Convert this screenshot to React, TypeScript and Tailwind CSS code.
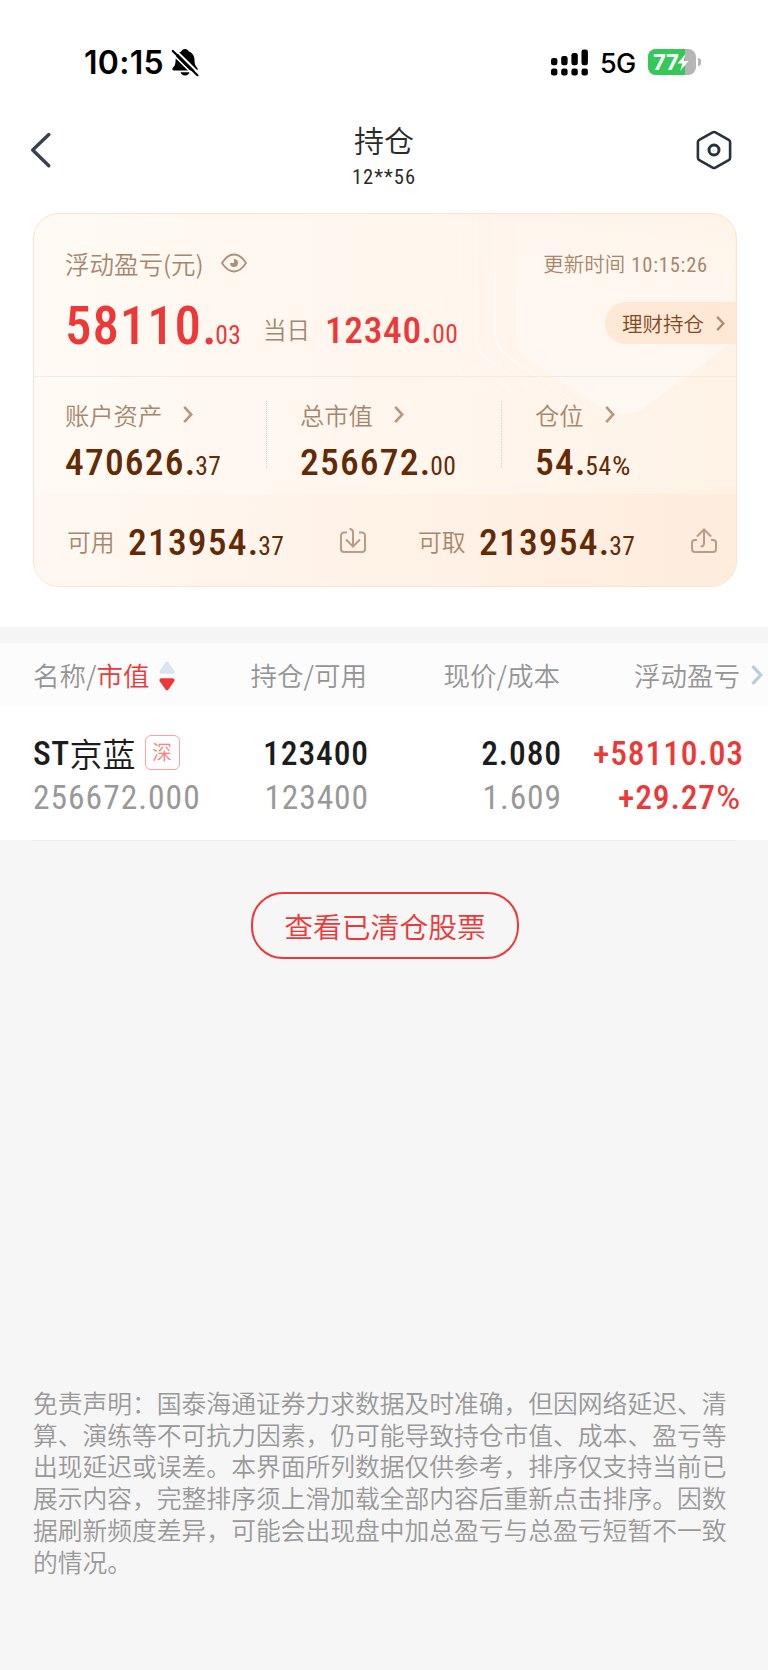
import { clsx } from 'clsx'

const CJK = "font-['Noto_Sans_CJK_SC',sans-serif]"
const NUM = "font-['Roboto_Condensed',Roboto,'Noto_Sans_CJK_SC',sans-serif]"
const SYS = "font-[Inter,'Noto_Sans_CJK_SC',sans-serif]"

function Chevron({ className }: { className?: string }) {
    return (
        <svg viewBox="0 0 10 18" fill="none" stroke="currentColor" strokeWidth="2.8" className={clsx('shrink-0', className)}>
            <path d="M1 1l7.4 8L1 17" />
        </svg>
    )
}

function StatusBar() {
    return (
        <div className={`h-[124px] flex justify-between pl-[84px] pr-[67px] pt-[44px] text-black ${SYS}`}>
            <div className="flex items-center h-9">
                <span className="text-[32px] font-semibold leading-9 tracking-[0.3px] w-[87px] pt-px">10:15</span>
                {/* Muted bell */}
                <svg width="28" height="30" viewBox="0 0 28 30" className="block">
                    <path d="M14 2c1.900 0 3.200 1 3.800 2.600 3.800 1.300 5.700 4.600 5.700 8.400 0 5 1.500 6.300 2.800 8 .9 1.300.3 2.500-1.200 2.500H3C1.500 23.500.8 22.300 1.800 21c1.400-1.700 2.800-3 2.800-8 0-3.800 1.900-7.100 5.600-8.400C10.800 3 12.100 2 14 2z" />
                    <path d="M9.500 25.300h9c-.4 2-2.200 3.200-4.500 3.200s-4.100-1.200-4.500-3.200z" />
                    <path d="M0 5.500L24.500 30" stroke="#fff" strokeWidth="1.600" />
                    <path d="M3 1.500L28 26.500" stroke="#fff" strokeWidth="2" />
                    <path d="M1.800 4L26.400 28.200" stroke="#000" strokeWidth="2.200" strokeLinecap="round" />
                </svg>
            </div>
            <div className="flex items-center h-9">
                <svg width="37" height="27" viewBox="0 0 37 27" className="mr-[12px]">
                    <rect x="0" y="9" width="6.400" height="7.300" rx="2.300" />
                    <rect x="10.200" y="7" width="6.400" height="9.300" rx="2.300" />
                    <rect x="20.400" y="4" width="6.400" height="12.300" rx="2.300" />
                    <rect x="30.500" y="0.500" width="6.400" height="15.800" rx="2.300" />
                    <rect x="0" y="19.500" width="6.400" height="7" rx="2.300" />
                    <rect x="10.200" y="19.500" width="6.400" height="7" rx="2.300" />
                    <rect x="20.400" y="19.500" width="6.400" height="7" rx="2.300" />
                    <rect x="30.500" y="19.500" width="6.400" height="7" rx="2.300" />
                </svg>
                <span className="text-[27px] font-[450] leading-9 w-[48px] tracking-[-0.7px] pt-[3px]">5G</span>
                {/* Battery */}
                <div className="relative w-12 h-[26px] rounded-[8px] overflow-hidden bg-[#b5b5b5]">
                    <div className="w-[37px] h-full bg-[#34c759]" />
                    <div className="absolute inset-0 flex items-center pl-[5px] text-white">
                        <span className="text-[22px] font-bold leading-[26px] tracking-[-0.3px]">77</span>
                        <svg width="12" height="17" viewBox="0 0 12 17" fill="#fff" className="-ml-px">
                            <path d="M8.500 0L0.500 9.500h4.800L3.200 17 11.500 7H6.700z" />
                        </svg>
                    </div>
                </div>
                <div className="ml-[2px] w-[3px] h-[8px] rounded-r-full bg-[#b5b5b5]" />
            </div>
        </div>
    )
}

function NavBar() {
    return (
        <div className="h-[89px] flex justify-between pl-[30px] pr-9">
            <svg width="40" height="38" viewBox="0 0 40 38" fill="none" stroke="#36424f" strokeWidth="3.400" strokeLinecap="round" strokeLinejoin="round" className="mt-[7px]">
                <path d="M18.800 3.500L2.700 19l16.100 15.700" />
            </svg>
            <div className="text-center text-[#2b2b2b] translate-x-px">
                <h1 className={`text-[30px] leading-9 -mt-[3px] font-[350] ${CJK}`}>持仓</h1>
                <p className={`text-[20.500px] leading-6 mt-2 font-[450] tracking-[1px] ${NUM}`}>12**56</p>
            </div>
            <svg width="36" height="40" viewBox="0 0 36 40" fill="none" stroke="#26323f" strokeWidth="2.600" strokeLinejoin="round" className="mt-[6px]">
                <path d="M16.600 2.400a2.800 2.800 0 0 1 2.800 0l13.300 7.500a2.800 2.800 0 0 1 1.400 2.400v15.400a2.800 2.800 0 0 1-1.400 2.400l-13.300 7.500a2.800 2.800 0 0 1-2.800 0L3.300 30.100a2.800 2.800 0 0 1-1.400-2.400V12.300a2.800 2.800 0 0 1 1.400-2.400z" />
                <circle cx="18" cy="20" r="5" strokeWidth="3" />
            </svg>
        </div>
    )
}

type AmountProps = { int: string; dec: string; className?: string }

function Amount({ int, dec, className = 'tracking-[1.200px]' }: AmountProps) {
    return (
        <span className={clsx('font-medium text-[37.500px] leading-10', NUM, className)}>
            {int}<span className="tracking-[0px]">.</span>
            <span className="text-[25.500px] font-[450] tracking-[0.5px]">{dec}</span>
        </span>
    )
}

const metrics = [
    { label: '账户资产', int: '470626', dec: '37' },
    { label: '总市值', int: '256672', dec: '00' },
    { label: '仓位', int: '54', dec: '54', unit: '%' },
]

function AssetCard() {
    return (
        <section className="relative mx-[33px] h-[374px] w-[704px] rounded-[26px] overflow-hidden border border-[#fde3c8] bg-gradient-to-r from-[#fffaf4] via-[#fff6ee] to-[#fff3e7]">
            {/* Shield watermark */}
            <svg className="absolute inset-0" width="702" height="280" viewBox="0 0 702 280" fill="none">
                <defs>
                    <linearGradient id="shield" x1="0" y1="0" x2="0" y2="1">
                        <stop offset="0" stopColor="#fff" stopOpacity="0" />
                        <stop offset="0.4" stopColor="#fff8f4" stopOpacity="0.6" />
                        <stop offset="1" stopColor="#fff9f3" stopOpacity="0.9" />
                    </linearGradient>
                    <linearGradient id="ring" x1="0" y1="0" x2="0" y2="1">
                        <stop offset="0" stopColor="#fff" stopOpacity="0.1" />
                        <stop offset="0.65" stopColor="#fff" stopOpacity="0.9" />
                        <stop offset="1" stopColor="#fff" stopOpacity="0.1" />
                    </linearGradient>
                </defs>
                <path d="M482 0V124q0 14 12 23l76 48q19 11 38 0l92-68V0z" fill="url(#shield)" />
                <g stroke="url(#ring)" strokeWidth="1.500">
                    <path d="M461 0V118q0 14 11 23l90 62" />
                    <path d="M442 0V122q0 14 11 23l84 58" opacity="0.8" />
                    <path d="M426 0V126q0 14 11 23l78 54" opacity="0.5" />
                    <path d="M408 0V130q0 14 11 23l72 50" opacity="0.3" />
                </g>
            </svg>

            <div className="relative">
                {/* Profit and loss */}
                <div className="h-[163px] pt-[34px] border-b border-[#f6eae0]">
                    <div className="flex items-center justify-between pl-[31px] pr-7 h-[30px] text-[#a8866c]">
                        <div className="flex items-center pt-px">
                            <span className={`text-[24.500px] leading-[30px] font-[350] ${CJK}`}>浮动盈亏(元)</span>
                            <svg width="26" height="20" viewBox="0 0 26 20" fill="none" stroke="#b08f75" strokeWidth="1.800" className="ml-[17px] -mt-[2px]">
                                <path d="M1 10C4.500 4.500 8.500 1.500 13 1.500S21.500 4.500 25 10c-3.500 5.500-7.500 8.500-12 8.500S4.500 15.500 1 10z" />
                                <path d="M13 6a4 4 0 1 1-4 4h4z" fill="#b08f75" stroke="none" />
                            </svg>
                        </div>
                        <div className="flex items-baseline text-[20.500px] leading-[30px] pt-px">
                            <span className={`font-[350] ${CJK}`}>更新时间</span>
                            <span className={`ml-[6px] font-[450] tracking-[0.8px] ${NUM}`}>10:15:26</span>
                        </div>
                    </div>
                    <div className="flex items-start justify-between mt-[18px] pl-[31px]">
                        <div className="flex items-start text-[#ed3838]">
                            <span className={`w-[198px] font-medium text-[53px] leading-[60px] tracking-[0.9px] ${NUM}`}>
                                58110<span className="tracking-[-1.500px]">.</span>
                                <span className="text-[25.500px] font-[450] tracking-[0.5px]">03</span>
                            </span>
                            <span className={`w-[62px] mt-[15px] text-[23.500px] leading-[36px] font-[350] text-[#a8866c] ${CJK}`}>当日</span>
                            <span className="mt-[14px] h-10 leading-10">
                                <Amount int="12340" dec="00" className="tracking-[0.600px]" />
                            </span>
                        </div>
                        <a className="mt-[6px] flex items-center w-[131px] h-[42px] pl-[17px] rounded-l-full bg-[#ffe8d6] text-[#7d4a22]">
                            <span className={`text-[20.500px] leading-[42px] font-[350] ${CJK}`}>理财持仓</span>
                            <Chevron className="ml-3 w-[9px] h-[15px] text-[#b08a6c]" />
                        </a>
                    </div>
                </div>

                {/* Metrics */}
                <div className="h-[117px] pl-[31px] pt-[24px] flex">
                    {metrics.map((m, i) => (
                        <div key={m.label} className="w-[235px] h-[67px] flex shrink-0">
                            <div className="flex-1">
                                <div className="flex items-center h-7 text-[#a8866c]">
                                    <span className={`text-[24.300px] leading-7 font-[350] ${CJK}`}>{m.label}</span>
                                    <Chevron className="ml-[21px] w-[10px] h-[17px] -mt-[2px] text-[#b8977e]" />
                                </div>
                                <div className="mt-[13px] text-[#632a04]">
                                    <Amount int={m.int} dec={m.dec} />
                                    {m.unit && <span className={`text-[26px] font-normal inline-block origin-left scale-x-[1.120] ${NUM}`}>{m.unit}</span>}
                                </div>
                            </div>
                            {i < 2 && <div className="w-px mr-[33px] border-l border-dotted border-[#dfd0c3]" />}
                        </div>
                    ))}
                </div>

                {/* Available funds */}
                <div className="h-[93px] flex items-center pl-[33px] pt-[4px] bg-gradient-to-r from-[#fff8f2] via-[#fff2e7] to-[#feecdd] text-[#632a04]">
                    <div className="w-[351px] flex items-center">
                        <span className={`w-[61px] text-[23.800px] leading-8 -mt-1 font-[350] text-[#a8866c] ${CJK}`}>可用</span>
                        <span className="w-[212px] pt-[3px]"><Amount int="213954" dec="37" /></span>
                        <svg width="26" height="26" viewBox="0 0 26 26" fill="none" stroke="#bd9b81" strokeWidth="2" className="-mt-[3px]">
                            <path d="M7 4.500H4a3 3 0 0 0-3 3V21a3 3 0 0 0 3 3h18a3 3 0 0 0 3-3V7.500a3 3 0 0 0-3-3h-3" />
                            <path d="M9.500 1C12 1 13 2 13 4.500V18M6 11.500l7 7 7-7" />
                        </svg>
                    </div>
                    <div className="flex items-center">
                        <span className={`w-[61px] text-[23.800px] leading-8 -mt-1 font-[350] text-[#a8866c] ${CJK}`}>可取</span>
                        <span className="w-[212px] pt-[3px]"><Amount int="213954" dec="37" /></span>
                        <svg width="26" height="26" viewBox="0 0 26 26" fill="none" stroke="#bd9b81" strokeWidth="2" className="-mt-[3px]">
                            <path d="M6 12H4a3 3 0 0 0-3 3v6a3 3 0 0 0 3 3h18a3 3 0 0 0 3-3v-6a3 3 0 0 0-3-3h-2" />
                            <path d="M9.500 18.500c2.500 0 3.500-1 3.500-3.500V2M6 8.500l7-7 7 7" />
                        </svg>
                    </div>
                </div>
            </div>
        </section>
    )
}

function Holdings() {
    return (
        <section>
            <div className={`h-[63px] flex items-center pl-[33px] bg-[#fcfcfc] text-[26.500px] font-[350] text-[#959595] ${CJK}`}>
                <div className="grid grid-cols-[173px_161px_193px_180px] text-right">
                    <div className="flex items-center">
                        名称/<span className="text-[#ed3838]">市值</span>
                        <svg width="16" height="30" viewBox="0 0 16 30" className="ml-[10px] mt-[3px]">
                            <path d="M6.700 1.200q1.300-1.600 2.600 0l6 8.500q1 2.800-1.500 3H2.200q-2.500-.2-1.500-3z" fill="#dbe4ee" />
                            <path d="M6.700 28.800q1.300 1.600 2.600 0l6-8.500q1-2.800-1.500-3H2.200q-2.500.2-1.500 3z" fill="#ed3838" />
                        </svg>
                    </div>
                    <div>持仓/可用</div>
                    <div>现价/成本</div>
                    <div>浮动盈亏</div>
                </div>
                <Chevron className="ml-[11px] w-[12px] h-[20px] text-[#bccbdc]" />
            </div>

            <div className="h-[134px] bg-white pt-[26px] pl-[33px]">
                <div className={`grid grid-cols-[173px_163px_193px_182px] text-right text-[33.500px] leading-[44px] tracking-[0.9px] text-[#1c1c1c] ${NUM}`}>
                    <div className="flex items-center h-11">
                        <span className="font-medium tracking-[0.5px]">ST</span>
                        <span className={`text-[33px] tracking-normal font-[350] -mt-[3px] ${CJK}`}>京蓝</span>
                        <span className={`ml-[9px] mb-[4px] size-[35px] rounded-[6px] border-[1.500px] border-[#fba3a3] flex items-center justify-center text-[20px] tracking-normal font-[350] text-[#f98080] ${CJK}`}>深</span>
                    </div>
                    <div className="font-medium">123400</div>
                    <div className="font-medium">2.080</div>
                    <div className="font-medium text-[#ed3838]">+58110.03</div>
                    <div className="text-left font-[450] tracking-[1px] text-[#999]">256672.000</div>
                    <div className="font-[450] text-[#999]">123400</div>
                    <div className="font-[450] text-[#999]">1.609</div>
                    <div className="font-medium text-[#ed3838]">+29.27<span className="inline-block w-[28px] text-left"><span className="inline-block origin-left scale-x-[1.150] font-normal">%</span></span></div>
                </div>
            </div>
            <div className="ml-8 mr-[31px] h-px bg-[#eeeeee]" />
        </section>
    )
}

export default function App() {
    return (
        <div lang="zh-CN" className="w-[768px] h-[1670px] overflow-hidden bg-[#f6f6f6]">
            <div className="h-[627px] bg-white">
                <StatusBar />
                <NavBar />
                <AssetCard />
            </div>
            <div className="h-4 bg-[#f5f5f5]" />
            <Holdings />

            <button className={`block ml-[251px] mt-[51px] w-[268px] h-[67px] rounded-[32px] border-2 border-[#ed3838] text-[28.800px] font-[350] text-[#ed3838] ${CJK}`}>
                查看已清仓股票
            </button>

            <p className={`mt-[428px] mx-[33px] text-[24.780px] leading-[31.700px] font-[350] text-[#999] ${CJK}`}>
                免责声明：国泰海通证券力求数据及时准确，但因网络延迟、清算、演练等不可抗力因素，仍可能导致持仓市值、成本、盈亏等出现延迟或误差。本界面所列数据仅供参考，排序仅支持当前已展示内容，完整排序须上滑加载全部内容后重新点击排序。因数据刷新频度差异，可能会出现盘中加总盈亏与总盈亏短暂不一致的情况。
            </p>
        </div>
    )
}
